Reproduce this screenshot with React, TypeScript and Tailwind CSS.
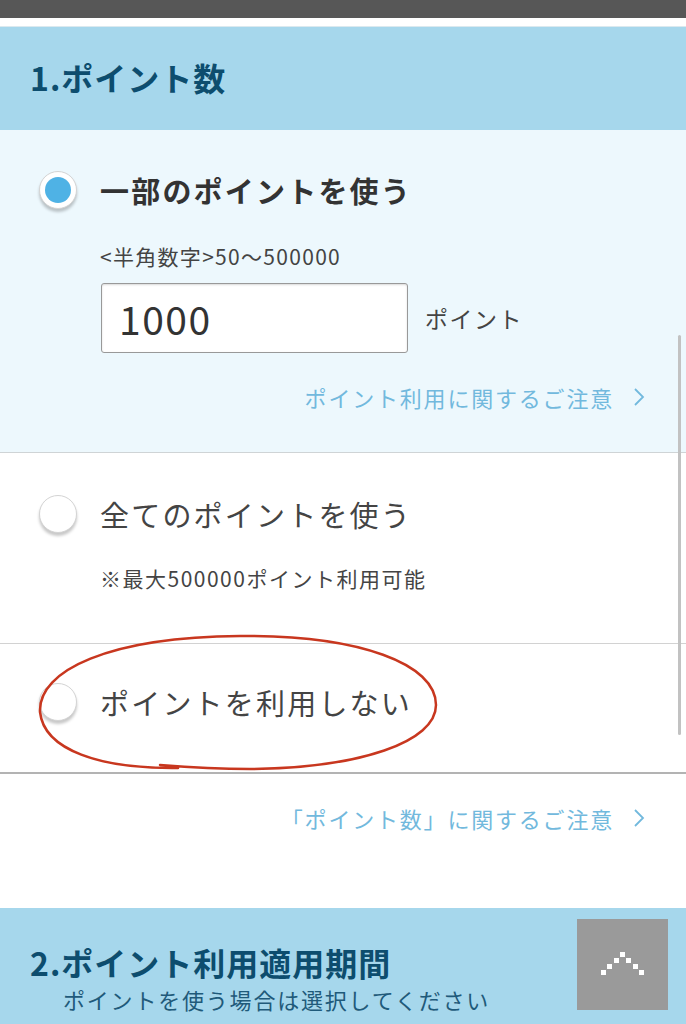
import React from "react";

const FONT = { fontFamily: '"Noto Sans CJK JP", "Noto Sans", sans-serif' };

function Radio({ checked }: { checked?: boolean }) {
  return (
    <div className="w-[38px] h-[38px] rounded-full bg-white border border-[#d4d4d4] shadow-[0_3px_3px_rgba(0,0,0,0.22)] flex items-center justify-center shrink-0">
      {checked && <div className="w-[26px] h-[26px] rounded-full bg-[#4fb2e5]" />}
    </div>
  );
}

function Chevron() {
  return (
    <svg width="12" height="20" viewBox="0 0 12 20" className="shrink-0">
      <polyline points="2,2 10,10 2,18" fill="none" stroke="#72b9dd" strokeWidth="1.8" />
    </svg>
  );
}

function NoteLink({ text }: { text: string }) {
  return (
    <div className="flex items-center justify-end pr-[41px] h-[30px]">
      <span className="text-[22px] leading-[30px] tracking-[1.8px] text-[#72b9dd]">{text}</span>
      <span className="ml-[19px] flex items-center">
        <Chevron />
      </span>
    </div>
  );
}

export default function App() {
  const dots: [number, number][] = [
    [43, 33],
    [37, 39],
    [49, 39],
    [30, 45],
    [56, 45],
    [24, 51],
    [62, 51],
  ];
  return (
    <div className="relative w-[686px] h-[1024px] overflow-hidden bg-white text-[#333]" style={FONT}>
      <div className="h-[18px] bg-[#575757]" />
      <div className="h-[9px] bg-white border-b border-[#dbe9ef]" />
      <div className="h-[103px] bg-[#a6d7ec] flex items-center pl-[30px]">
        <span className="text-[32px] font-bold tracking-[1px] text-[#0d4d6e] leading-[40px] -mt-[3px]">1.ポイント数</span>
      </div>

      <div className="h-[323px] bg-[#edf8fd] border-b border-[#cfd4d6] pt-[40px]">
        <div className="flex items-center h-[40px] pl-[39px] gap-[23px]">
          <Radio checked />
          <span className="text-[29px] font-bold tracking-[2.2px] leading-[40px] text-[#333]">一部のポイントを使う</span>
        </div>
        <div className="mt-[34px] pl-[100px] text-[21px] leading-[24px] tracking-[1.3px] text-[#444]">&lt;半角数字&gt;50〜500000</div>
        <div className="mt-[15px] pl-[101px] flex items-center">
          <div className="w-[307px] h-[70px] bg-white border border-[#999] rounded-[3px] shadow-[inset_0_1px_2px_rgba(0,0,0,0.15)] flex items-center pl-[17px]">
            <span className="text-[39px] leading-[40px] text-[#333] tracking-[1.5px]">1000</span>
          </div>
          <span className="ml-[17px] text-[23px] leading-[30px] tracking-[1.5px] text-[#444]">ポイント</span>
        </div>
        <div className="mt-[29px]">
          <NoteLink text="ポイント利用に関するご注意" />
        </div>
      </div>

      <div className="h-[191px] bg-white border-b border-[#d2d2d2] pt-[41px]">
        <div className="flex items-center h-[40px] pl-[39px] gap-[23px]">
          <Radio />
          <span className="text-[29px] tracking-[2.2px] leading-[40px] text-[#444]">全てのポイントを使う</span>
        </div>
        <div className="mt-[32px] pl-[100px] text-[21px] leading-[24px] tracking-[1.5px] text-[#444]">※最大500000ポイント利用可能</div>
      </div>

      <div className="h-[130px] bg-white border-b-2 border-[#b3b3b3] pt-[38px]">
        <div className="flex items-center h-[40px] pl-[39px] gap-[23px]">
          <Radio />
          <span className="text-[29px] tracking-[2.2px] leading-[40px] text-[#444]">ポイントを利用しない</span>
        </div>
      </div>

      <div className="h-[134px] bg-white pt-[29px]">
        <NoteLink text="「ポイント数」に関するご注意" />
      </div>

      <div className="bg-[#a6d7ec] pt-[34px] pb-[40px]">
        <div className="pl-[30px] text-[32px] font-bold tracking-[1px] text-[#0d4d6e] leading-[40px]">2.ポイント利用適用期間</div>
        <div className="pl-[63px] mt-[1px] text-[22px] tracking-[1.8px] leading-[32px] text-[#1f5a7a]">ポイントを使う場合は選択してください</div>
      </div>

      <div className="absolute left-[577px] top-[919px] w-[91px] h-[91px] bg-[#9a9a9a]">
        <svg width="91" height="91" viewBox="0 0 91 91" shapeRendering="crispEdges">
          {dots.map(([x, y], i) => (
            <rect key={i} x={x} y={y} width="5" height="5" fill="#ffffff" />
          ))}
        </svg>
      </div>

      <div className="absolute right-[5px] top-[335px] w-[3px] h-[400px] bg-[#c2c2c2] rounded-full" />

      <svg className="absolute left-0 top-0 pointer-events-none" width="686" height="1024" viewBox="0 0 686 1024">
        <path
          d="M 178 768 C 100 769, 44 750, 40 712 C 38 670, 110 637, 240 636 C 360 635, 436 664, 436 705 C 436 742, 360 768, 250 769 C 215 769, 185 767, 160 765"
          fill="none"
          stroke="#c8371f"
          strokeWidth="2.5"
          strokeLinecap="round"
        />
      </svg>
    </div>
  );
}
